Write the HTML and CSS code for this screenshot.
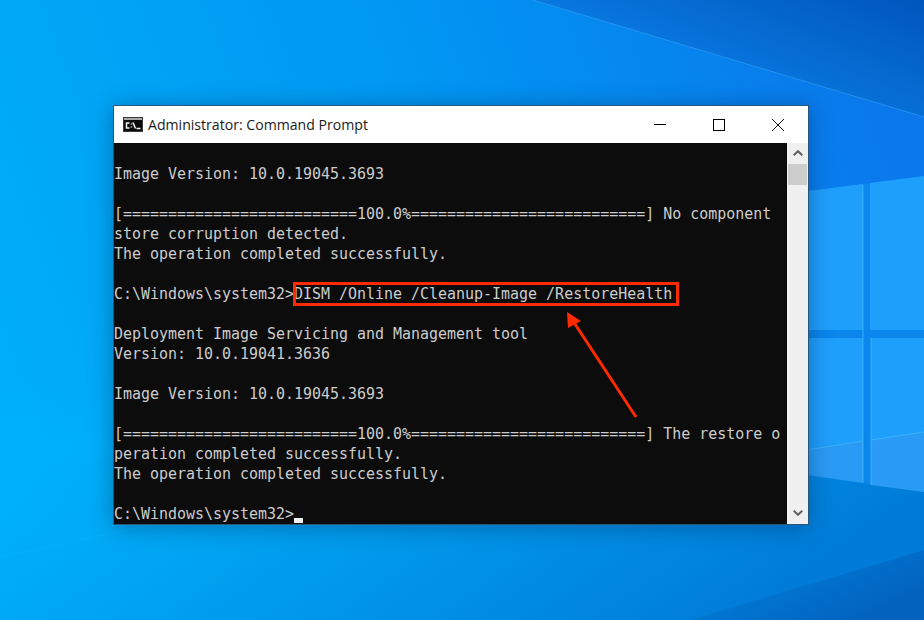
FILE: index.html
```html
<!DOCTYPE html>
<html lang="en">
<head>
<meta charset="utf-8">
<title>Administrator: Command Prompt</title>
<link rel="stylesheet" href="styles.css">
</head>
<body>
<div class="desktop">
  <svg class="wallpaper" viewBox="0 0 924 620" aria-hidden="true">
    <defs>
      <linearGradient id="sky" x1="0" y1="0.6" x2="1" y2="0.35">
        <stop offset="0" stop-color="#00aef9"/>
        <stop offset="0.5" stop-color="#0099f3"/>
        <stop offset="1" stop-color="#0a78ec"/>
      </linearGradient>
      <linearGradient id="rayTop" x1="0.2" y1="0.6" x2="1" y2="0">
        <stop offset="0" stop-color="#0a80e8"/>
        <stop offset="1" stop-color="#0056bc"/>
      </linearGradient>
      <linearGradient id="floor" x1="0" y1="0" x2="0" y2="1">
        <stop offset="0" stop-color="#00b2fc" stop-opacity="0"/>
        <stop offset="0.6" stop-color="#00b2fc" stop-opacity="1"/>
        <stop offset="1" stop-color="#00b2fc"/>
      </linearGradient>
      <linearGradient id="floorRight" x1="0" y1="0" x2="1" y2="0.25">
        <stop offset="0" stop-color="#00a6f2" stop-opacity="0"/>
        <stop offset="0.4" stop-color="#00a0ef"/>
        <stop offset="1" stop-color="#007bd8"/>
      </linearGradient>
      <linearGradient id="floorDark" x1="0" y1="0" x2="1" y2="0.6">
        <stop offset="0" stop-color="#0088e2"/>
        <stop offset="1" stop-color="#0262be"/>
      </linearGradient>
    </defs>
    <rect width="924" height="620" fill="url(#sky)"/>
    <polygon points="533,0 924,117 924,0" fill="url(#rayTop)"/>
    <rect x="0" y="380" width="924" height="240" fill="url(#floor)"/>
    <rect x="0" y="460" width="924" height="160" fill="url(#floorRight)"/>
    <polygon points="924,550 924,620 690,620" fill="url(#floorDark)"/>
    <polygon points="0,556 150,524 150,526 0,558" class="glint"/>
    <line x1="533" y1="0" x2="924" y2="117" class="ray"/>
    <polygon points="800,192 924,176 924,492 800,474" class="bar"/>
    <polygon points="800,192 863,184 863,330 800,330" class="pane"/>
    <polygon points="870,183 924,176 924,330 870,330" class="pane"/>
    <polygon points="800,338 863,338 863,441 800,451" class="pane"/>
    <polygon points="871,338 924,338 924,432 871,440" class="pane"/>
    <polygon points="800,451 863,441 863,483 800,474" class="pane-low"/>
    <polygon points="871,440 924,432 924,492 871,485" class="pane-low"/>
    <line x1="863" y1="185" x2="863" y2="483" class="pane-edge"/>
    <line x1="871" y1="338" x2="871" y2="485" class="pane-edge"/>
    <line x1="800" y1="451" x2="863" y2="441" class="pane-edge"/>
    <line x1="871" y1="440" x2="924" y2="432" class="pane-edge"/>
  </svg>

  <main class="window">
    <header class="titlebar">
      <svg class="app-icon" viewBox="0 0 20 15" aria-hidden="true">
        <rect width="20" height="15" fill="#3a3a3a"/>
        <rect x="1" y="1" width="18" height="2" fill="#a8a8a8"/>
        <rect x="1" y="3" width="18" height="11" fill="#0a0a0a"/>
        <path d="M6.5 6H3.5v5h3M8.5 6.5v1M8.5 9.5v1M10 5.5l2.5 6M13.5 11.5h4" fill="none" stroke="#f4f4f4" stroke-width="1.5"/>
      </svg>
      <h1 class="title">Administrator: Command Prompt</h1>
      <div class="controls">
        <span class="control">
          <svg viewBox="0 0 12 12" aria-hidden="true"><path d="M0 5.5H12" class="glyph"/></svg>
        </span>
        <span class="control">
          <svg viewBox="0 0 12 12" aria-hidden="true"><rect x="0.5" y="0.5" width="11" height="11" class="glyph"/></svg>
        </span>
        <span class="control">
          <svg viewBox="0 0 12 12" aria-hidden="true"><path d="M0 0L12 12M12 0L0 12" class="glyph thin"/></svg>
        </span>
      </div>
    </header>
    <div class="body">
      <pre class="console">

Image Version: 10.0.19045.3693

[==========================100.0%==========================] No component
store corruption detected.
The operation completed successfully.

C:\Windows\system32&gt;DISM /Online /Cleanup-Image /RestoreHealth

Deployment Image Servicing and Management tool
Version: 10.0.19041.3636

Image Version: 10.0.19045.3693

[==========================100.0%==========================] The restore o
peration completed successfully.
The operation completed successfully.

C:\Windows\system32&gt;<span class="cursor"></span></pre>
      <aside class="scrollbar">
        <svg class="chev" viewBox="0 0 10 6" aria-hidden="true"><path d="M0.7 5.3L5 1.2L9.3 5.3"/></svg>
        <div class="thumb"></div>
        <div class="track"></div>
        <svg class="chev" viewBox="0 0 10 6" aria-hidden="true"><path d="M0.7 0.7L5 4.8L9.3 0.7"/></svg>
      </aside>
    </div>
  </main>

  <div class="highlight"></div>
  <svg class="arrow" viewBox="0 0 924 620" aria-hidden="true">
    <line x1="636" y1="417" x2="573" y2="321"/>
    <polygon points="567,312 581,321 568,328"/>
  </svg>
</div>
</body>
</html>
```
FILE: styles.css
```css
html, body {
  margin: 0;
  height: 100%;
  overflow: hidden;
}

.desktop {
  position: relative;
  width: 924px;
  height: 620px;
  padding: 105px 0 0 113px;
  box-sizing: border-box;
  overflow: hidden;
}

.wallpaper, .arrow {
  position: absolute;
  left: 0;
  top: 0;
  width: 924px;
  height: 620px;
}

.wallpaper { z-index: 0; }
.arrow { z-index: 3; pointer-events: none; }
.arrow line { stroke: #ff2a00; stroke-width: 3; }
.arrow polygon { fill: #ff2a00; }

.ray { stroke: #3aa4f6; stroke-width: 1; opacity: 0.55; }
.glint { fill: #1cc0ff; opacity: 0.15; }
.bar { fill: #0a86ec; }
.pane { fill: #1f9ffc; }
.pane-low { fill: #2a9bf4; }
.pane-edge { stroke: #45b8fc; stroke-width: 1; opacity: 0.8; }

.window {
  position: relative;
  z-index: 1;
  width: 696px;
  height: 420px;
  box-sizing: border-box;
  border: 1px solid #24587e;
  border-left-color: #1e5a80;
  display: flex;
  flex-direction: column;
  background: #fff;
  box-shadow: 0 2px 22px rgba(0, 30, 70, 0.38);
}

.titlebar {
  flex: none;
  height: 37px;
  display: flex;
  align-items: center;
  background: #fff;
  padding-left: 9px;
}

.app-icon {
  width: 20px;
  height: 15px;
  flex: none;
  margin-right: 5px;
  margin-top: -1px;
}

.title {
  margin: 0;
  font: 400 14.1px/20px "Open Sans", "Noto Sans", sans-serif;
  color: #1a1a1a;
  flex: 1;
  white-space: nowrap;
}

.controls {
  display: flex;
  height: 37px;
  margin-right: 1px;
}

.control {
  width: 59px;
  height: 37px;
  display: flex;
  align-items: center;
  justify-content: center;
}

.control svg {
  width: 12px;
  height: 12px;
  display: block;
}

.glyph {
  fill: none;
  stroke: #000;
  stroke-width: 1;
}

.glyph.thin { stroke: #111; }

.body {
  flex: 1;
  display: flex;
  min-height: 0;
}

.console {
  flex: 1;
  margin: 0;
  padding-top: 1px;
  background: #0c0c0c;
  color: #cccccc;
  font: 400 14.96px/20px "DejaVu Sans Mono", "Liberation Mono", monospace;
  overflow: hidden;
  min-width: 0;
}

.cursor {
  display: inline-block;
  width: 9px;
  height: 5px;
  background: #f2f2f2;
  vertical-align: -4px;
}

.scrollbar {
  flex: none;
  width: 21px;
  background: #f0f0f0;
  display: flex;
  flex-direction: column;
  align-items: center;
}

.chev {
  flex: none;
  width: 10px;
  height: 6px;
  margin: 7px 0 8px;
}

.chev path {
  fill: none;
  stroke: #606060;
  stroke-width: 2;
}

.thumb {
  flex: none;
  width: 19px;
  height: 21px;
  background: #cdcdcd;
}

.track { flex: 1; }

.highlight {
  position: absolute;
  z-index: 2;
  left: 293px;
  top: 282px;
  width: 386px;
  height: 24px;
  box-sizing: border-box;
  border: 3px solid #ff2a00;
}
```
